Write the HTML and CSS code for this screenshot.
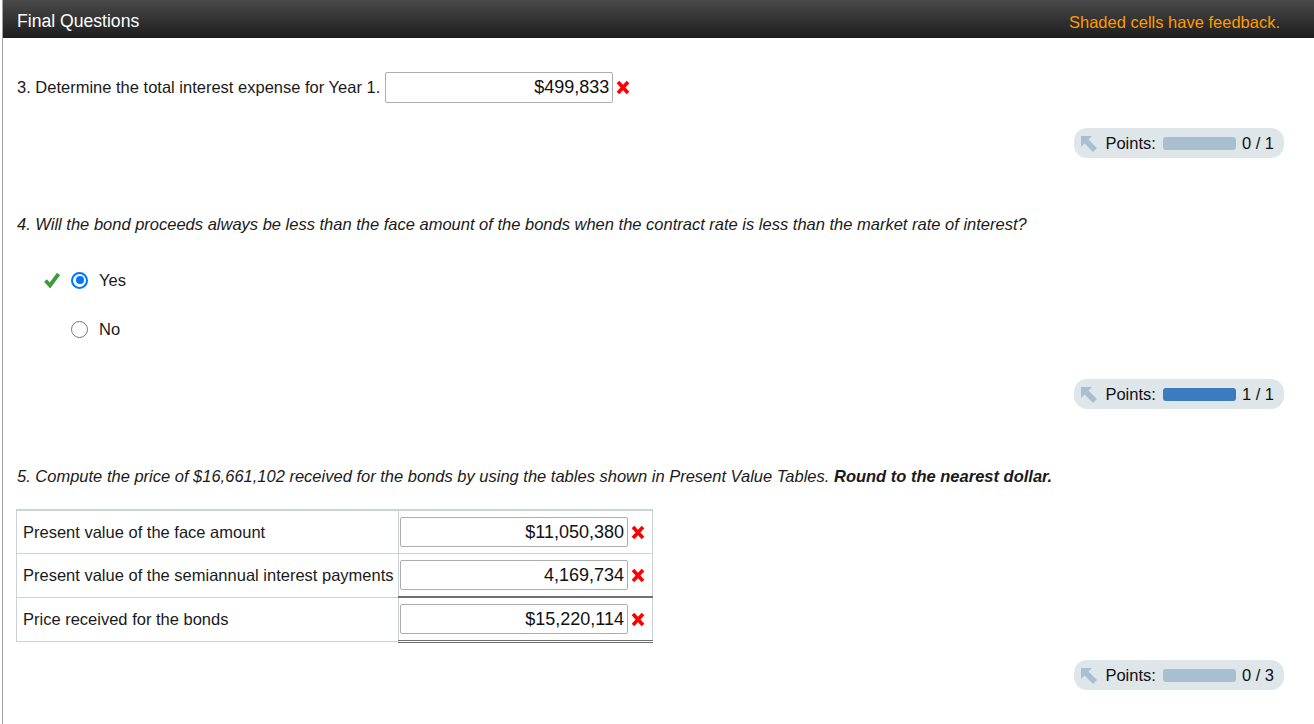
FILE: index.html
```html
<!DOCTYPE html>
<html>
<head>
<meta charset="utf-8">
<link rel="stylesheet" href="styles.css">
</head>
<body>
<div class="page">
  <div class="header">
    <span class="title">Final Questions</span>
    <span class="note">Shaded cells have feedback.</span>
  </div>
  <div class="content">
    <div class="q3">
      <span>3. Determine the total interest expense for Year 1.</span>
      <span class="answer wide">$499,833</span>
      <svg class="xmark" viewBox="0 0 14 15" width="14" height="15"><path d="M2 2 L12 13 M12 2 L2 13" stroke="#f00" stroke-width="3.6"/></svg>
    </div>

    <div class="points-row r1">
      <div class="points">
        <svg class="picon" viewBox="0 0 18 18" width="18" height="18"><polygon points="1,2 12,2 1,13" fill="#a7bfcf"/><path d="M4 5 L15 16" stroke="#a7bfcf" stroke-width="5.5"/></svg>
        <span>Points:</span>
        <span class="bar"></span>
        <span class="score">0 / 1</span>
      </div>
    </div>

    <p class="q italic q4">4. Will the bond proceeds always be less than the face amount of the bonds when the contract rate is less than the market rate of interest?</p>

    <div class="options">
      <div class="opt">
        <svg class="check" viewBox="0 0 16 16" width="16" height="16"><path d="M1.5 8.5 L6 13.5 L14.5 2" fill="none" stroke="#3d9b3d" stroke-width="3.8"/></svg>
        <span class="radio checked"></span>
        <span>Yes</span>
      </div>
      <div class="opt">
        <span class="check-space"></span>
        <span class="radio"></span>
        <span>No</span>
      </div>
    </div>

    <div class="points-row r2">
      <div class="points">
        <svg class="picon" viewBox="0 0 18 18" width="18" height="18"><polygon points="1,2 12,2 1,13" fill="#a7bfcf"/><path d="M4 5 L15 16" stroke="#a7bfcf" stroke-width="5.5"/></svg>
        <span>Points:</span>
        <span class="bar full"></span>
        <span class="score">1 / 1</span>
      </div>
    </div>

    <p class="q italic q5">5. Compute the price of $16,661,102 received for the bonds by using the tables shown in Present Value Tables. <b>Round to the nearest dollar.</b></p>

    <table class="grid">
      <tr>
        <td class="label">Present value of the face amount</td>
        <td class="val"><div class="cell"><span class="answer">$11,050,380</span><svg class="xmark" viewBox="0 0 14 15" width="14" height="15"><path d="M2 2 L12 13 M12 2 L2 13" stroke="#f00" stroke-width="3.6"/></svg></div></td>
      </tr>
      <tr>
        <td class="label">Present value of the semiannual interest payments</td>
        <td class="val"><div class="cell"><span class="answer">4,169,734</span><svg class="xmark" viewBox="0 0 14 15" width="14" height="15"><path d="M2 2 L12 13 M12 2 L2 13" stroke="#f00" stroke-width="3.6"/></svg></div></td>
      </tr>
      <tr class="total">
        <td class="label">Price received for the bonds</td>
        <td class="val"><div class="cell"><span class="answer">$15,220,114</span><svg class="xmark" viewBox="0 0 14 15" width="14" height="15"><path d="M2 2 L12 13 M12 2 L2 13" stroke="#f00" stroke-width="3.6"/></svg></div></td>
      </tr>
    </table>

    <div class="points-row r3">
      <div class="points">
        <svg class="picon" viewBox="0 0 18 18" width="18" height="18"><polygon points="1,2 12,2 1,13" fill="#a7bfcf"/><path d="M4 5 L15 16" stroke="#a7bfcf" stroke-width="5.5"/></svg>
        <span>Points:</span>
        <span class="bar"></span>
        <span class="score">0 / 3</span>
      </div>
    </div>
  </div>
</div>
</body>
</html>
```

FILE: styles.css
```css
html, body {
  margin: 0;
  padding: 0;
  background: #fff;
}
body {
  font-family: "Liberation Sans", Arial, sans-serif;
  font-size: 16.5px;
  color: #1a1a1a;
}
.page {
  margin-left: 2px;
  border-left: 1px solid #a0a0a0;
  min-height: 724px;
}
.header {
  height: 38px;
  display: flex;
  align-items: center;
  justify-content: space-between;
  padding: 0 34px 0 14px;
  background: linear-gradient(#4a4a4a, #1d1d1d);
}
.title {
  color: #fff;
  font-size: 17.6px;
  margin-top: 4px;
}
.note {
  color: #ff9a00;
  font-size: 16.5px;
  margin-top: 7px;
}
.content {
  padding-left: 14px;
}
.q3 {
  display: flex;
  align-items: center;
  margin-top: 34px;
  height: 31px;
}
.answer {
  display: inline-block;
  box-sizing: border-box;
  width: 228px;
  height: 30px;
  line-height: 28px;
  border: 1px solid #adadad;
  border-radius: 2px;
  text-align: right;
  padding-right: 3px;
  font-size: 18px;
  color: #111;
  background: #fff;
}
.answer.wide {
  height: 31px;
  line-height: 29px;
  margin-left: 5px;
}
.xmark {
  margin-left: 3px;
  flex: none;
}
.points-row {
  display: flex;
  justify-content: flex-end;
  padding-right: 30px;
}
.r1 { margin-top: 25px; }
.r2 { margin-top: 41px; }
.r3 { margin-top: 17px; }
.points {
  display: flex;
  align-items: center;
  height: 30px;
  padding: 0 10px 0 6px;
  border-radius: 13px;
  background: #dfe6ea;
  color: #111;
}
.picon {
  margin-right: 7px;
}
.bar {
  width: 73px;
  height: 13px;
  border-radius: 3px;
  background: #a7bfcf;
  margin: 0 6px 0 7px;
}
.bar.full {
  background: #3c7bbd;
}
.q {
  margin: 0;
  line-height: 18px;
  color: #1a1a1a;
}
.italic { font-style: italic; }
.q4 { margin-top: 57px; }
.q5 { margin-top: 58px; }
.q5 b { font-weight: bold; }
.options {
  margin-top: 38px;
}
.opt {
  display: flex;
  align-items: center;
  height: 18px;
  margin-bottom: 31px;
  padding-left: 27px;
}
.check, .check-space {
  width: 16px;
  height: 16px;
  margin-right: 11px;
}
.radio {
  box-sizing: border-box;
  width: 17px;
  height: 17px;
  border-radius: 50%;
  border: 1px solid #767676;
  background: #fff;
  margin-right: 11px;
  position: relative;
}
.radio.checked {
  border: 2px solid #0075ff;
}
.radio.checked::after {
  content: "";
  position: absolute;
  left: 2.5px;
  top: 2.5px;
  width: 8px;
  height: 8px;
  border-radius: 50%;
  background: #0075ff;
}
.grid {
  margin-top: 24px;
  margin-left: -1px;
  border-collapse: collapse;
  width: 637px;
  border-top: 2px solid #ccd3d8;
}
.grid td {
  height: 42px;
  padding: 0;
  border: 1px solid #ccd3d8;
}
.grid .label {
  width: 376px;
  padding-left: 6px;
  color: #1a1a1a;
}
.grid .val {
  width: 253px;
}
.cell {
  display: flex;
  align-items: center;
  padding-left: 1px;
}
.total .val {
  border-top: 2px solid #707070;
  border-bottom: 3px double #707070;
}
```
